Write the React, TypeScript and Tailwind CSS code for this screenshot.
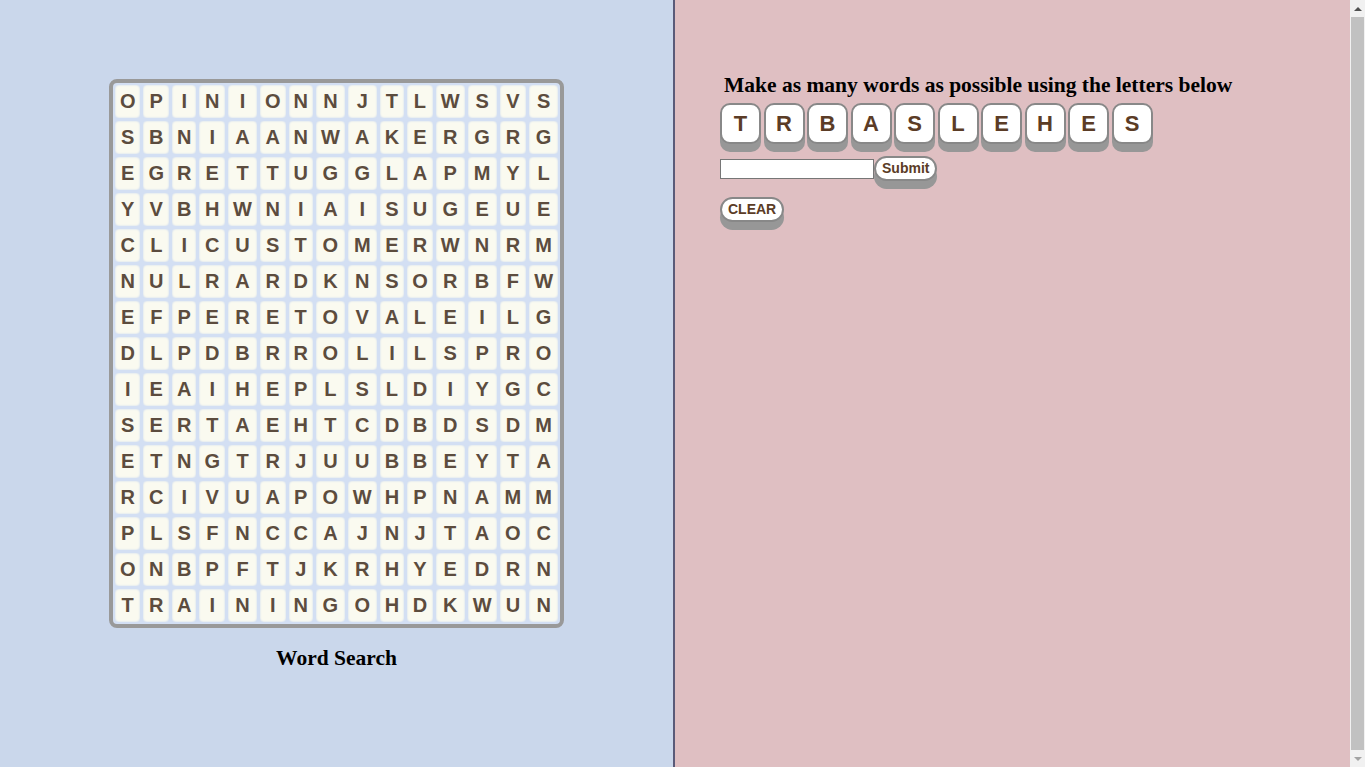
const GRID = [
  "OPINIONNJTLWSVS",
  "SBNIAANWAKERGRG",
  "EGRETTUGGLAPMYL",
  "YVBHWNIAISUGEUE",
  "CLICUSTOMERWNRM",
  "NULRARDKNSORBFW",
  "EFPERETOVALEILG",
  "DLPDBRROLILSPRO",
  "IEAIHEPLSLDIYGC",
  "SERTAEHTCDBDSDM",
  "ETNGTRJUUBBEYTA",
  "RCIVUAPOWHPNAMM",
  "PLSFNCCAJNJTAOC",
  "ONBPFTJKRHYEDRN",
  "TRAININGOHDKWUN",
];

const LETTERS = ["T", "R", "B", "A", "S", "L", "E", "H", "E", "S"];

function WordGrid() {
  return (
    <div className="rounded-[8px] border-4 border-[#999] bg-[#d3dff3] p-[2px]">
      <div className="grid grid-cols-[repeat(15,auto)] gap-[3px]">
        {GRID.map((row, r) =>
          row.split("").map((ch, c) => (
            <div
              key={r + "-" + c}
              className="rounded-[4px] bg-[#fafaf0] px-[5px] py-[5px] text-center text-[20px] leading-[23px] font-bold text-[#5c4c3e] shadow-[inset_0_0_2px_#c3d3ee]"
            >
              {ch}
            </div>
          ))
        )}
      </div>
    </div>
  );
}

function Scrollbar() {
  return (
    <div className="flex h-[767px] w-[15px] shrink-0 flex-col items-center bg-[#f1f1f1]">
      <div className="flex h-[17px] items-center justify-center">
        <div className="h-0 w-0 border-x-[4px] border-b-[4px] border-x-transparent border-b-[#505050]" />
      </div>
      <div className="w-[13px] flex-1 bg-[#c1c1c1]" />
      <div className="flex h-[17px] items-center justify-center">
        <div className="h-0 w-0 border-x-[4px] border-t-[4px] border-x-transparent border-t-[#a3a3a3]" />
      </div>
    </div>
  );
}

export default function App() {
  return (
    <div className="flex h-[767px] w-full overflow-hidden font-['Liberation_Sans',Arial,sans-serif]">
      <div className="flex h-[776px] w-[1350px] shrink-0">
        <div className="flex w-1/2 flex-col items-center border-r-2 border-[#5a5a78] bg-[#cad7eb] pt-[79px]">
          <WordGrid />
          <h2 className="mt-[14px] font-['Liberation_Serif','Times_New_Roman',serif] text-[21.5px] font-bold text-black">
            Word Search
          </h2>
        </div>

        <div className="w-1/2 bg-[#dfbfc2] pl-[45px] pt-[69px]">
          <h3 className="ml-[4px] font-['Liberation_Serif','Times_New_Roman',serif] text-[21.5px] font-bold text-black">
            Make as many words as possible using the letters below
          </h3>

          <div className="mt-[2px] flex gap-[2.5px]">
            {LETTERS.map((l, i) => (
              <button
                key={i}
                className="flex h-[41px] w-[41px] items-center justify-center rounded-[10px] border-2 border-[#888] bg-white text-[22px] font-bold text-[#5b3c26] shadow-[0_8px_0_#979797]"
              >
                {l}
              </button>
            ))}
          </div>

          <div className="mt-[12px] flex items-center">
            <input
              type="text"
              className="h-[20px] w-[154px] border border-[#767676] bg-white"
            />
            <button className="h-[25px] rounded-full border-2 border-[#888] bg-white px-[6px] text-[14px] font-bold text-[#5b3c26] shadow-[0_8px_0_#979797]">
              Submit
            </button>
          </div>

          <button className="mt-[16px] h-[25px] rounded-full border-2 border-[#888] bg-white px-[6px] text-[14px] font-bold text-[#5b3c26] shadow-[0_8px_0_#979797]">
            CLEAR
          </button>
        </div>
      </div>
      <Scrollbar />
    </div>
  );
}
